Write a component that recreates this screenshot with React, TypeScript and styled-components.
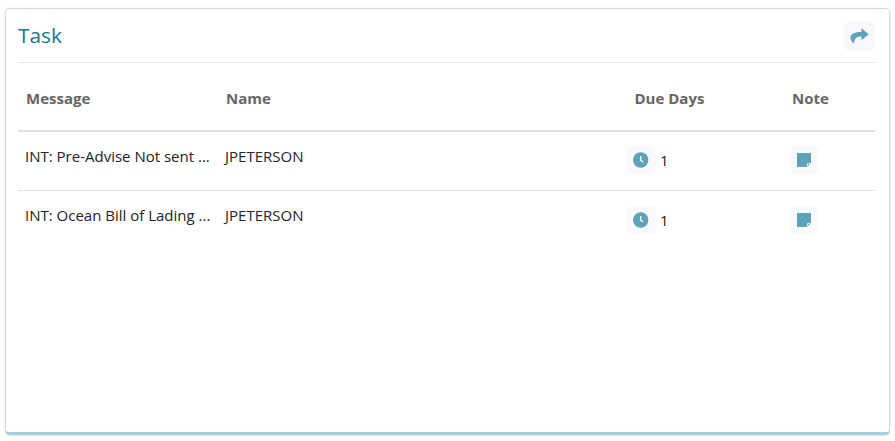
import React from "react";
import styled, { createGlobalStyle } from "styled-components";

const Global = createGlobalStyle`
  html, body { margin: 0; padding: 0; background: #fff; }
  body { font-family: "Open Sans", "Liberation Sans", sans-serif; }
`;

const Page = styled.div`
  width: 895px;
  height: 441px;
  padding: 8px 5px 5px 5px;
  box-sizing: border-box;
`;

const Card = styled.section`
  width: 885px;
  height: 427px;
  box-sizing: border-box;
  background: #fff;
  border: 1px solid #d8d8d8;
  border-bottom: 3px solid #a5cddb;
  border-radius: 5px;
  padding: 0 14px 0 12px;
  box-shadow: 0 1px 3px rgba(0, 0, 0, 0.12);
`;

const Header = styled.header`
  height: 53px;
  border-bottom: 1px solid #e6e6e6;
  display: flex;
  align-items: center;
  justify-content: space-between;
`;

const Title = styled.h2`
  margin: 0;
  font-size: 20.8px;
  line-height: 27px;
  font-weight: 400;
  color: #17788f;
`;

const IconButton = styled.button<{ $w?: number; $h?: number }>`
  width: ${(p) => p.$w ?? 31}px;
  height: ${(p) => p.$h ?? 30}px;
  padding: 0;
  border: 0;
  border-radius: 6px;
  background: #f7f9fd;
  display: inline-flex;
  align-items: center;
  justify-content: center;
  flex: none;
`;

const Row = styled.div<{ $head?: boolean }>`
  display: grid;
  grid-template-columns: 207px 402px 157px 91px;
  height: ${(p) => (p.$head ? 67 : 58)}px;
  border-bottom: ${(p) => (p.$head ? "2px solid #dee2e6" : "1px solid #e3e3e8")};
  &:last-child {
    border-bottom: 0;
  }
`;

const HeadCell = styled.div<{ $pad: number }>`
  padding: 2px 0 0 ${(p) => p.$pad}px;
  font-size: 15px;
  font-weight: 700;
  line-height: 20px;
  color: #666666;
  align-self: center;
`;

const TextCell = styled.div<{ $pad: number }>`
  padding: 14px 0 0 ${(p) => p.$pad}px;
  font-size: 15px;
  line-height: 20px;
  color: #212529;
  white-space: nowrap;
`;

const IconCell = styled.div<{ $pad: number; $top: number }>`
  padding: ${(p) => p.$top}px 0 0 ${(p) => p.$pad}px;
  display: flex;
  align-items: flex-start;
  gap: 4px;
`;

const Count = styled.span`
  font-size: 15px;
  line-height: 28px;
  color: #212529;
`;

const ShareIcon = () => (
  <svg width="19" height="16" viewBox="0 0 19 16">
    <path fill="#5fa3bb" d="M11.4 0.3 18.7 6.3 11.4 12.3V8.6C7.2 8.5 4.6 9.7 3.9 15.6 1.3 13.6 0.3 11.2 0.6 8.9 1.1 5.3 5.3 3.8 11.4 3.9Z" />
  </svg>
);

const ClockIcon = () => (
  <svg width="17" height="16" viewBox="0 0 17 16">
    <circle cx="7.7" cy="8" r="7.7" fill="#5fa3bb" />
    <path d="M7.7 4V8.2L10.2 10.1" fill="none" stroke="#fff" strokeWidth="1.3" />
  </svg>
);

const NoteIcon = () => (
  <svg width="15" height="14" viewBox="0 0 15 14">
    <path fill="#5fa3bb" d="M0 0H14V10L10 14H0Z" />
    <path fill="#eef4f7" d="M14 10.2V14H10.2Z" />
    <path fill="none" stroke="#eef4f7" strokeWidth="0.9" d="M10.4 13.6V10.4H13.6" />
  </svg>
);

const rows = [
  { message: "INT: Pre-Advise Not sent ...", top: 14 },
  { message: "INT: Ocean Bill of Lading ...", top: 15 },
];

export default function App() {
  return (
    <>
      <Global />
      <Page>
        <Card>
          <Header>
            <Title>Task</Title>
            <IconButton aria-label="Open">
              <ShareIcon />
            </IconButton>
          </Header>
          <Row $head>
            <HeadCell $pad={8}>Message</HeadCell>
            <HeadCell $pad={1}>Name</HeadCell>
            <HeadCell $pad={7.5}>Due Days</HeadCell>
            <HeadCell $pad={8}>Note</HeadCell>
          </Row>
          {rows.map((r) => (
            <Row key={r.message}>
              <TextCell $pad={7}>{r.message}</TextCell>
              <TextCell $pad={0}>JPETERSON</TextCell>
              <IconCell $pad={0} $top={r.top}>
                <IconButton $w={29} $h={28}>
                  <ClockIcon />
                </IconButton>
                <Count>1</Count>
              </IconCell>
              <IconCell $pad={7} $top={r.top}>
                <IconButton $w={27} $h={28}>
                  <NoteIcon />
                </IconButton>
              </IconCell>
            </Row>
          ))}
        </Card>
      </Page>
    </>
  );
}
